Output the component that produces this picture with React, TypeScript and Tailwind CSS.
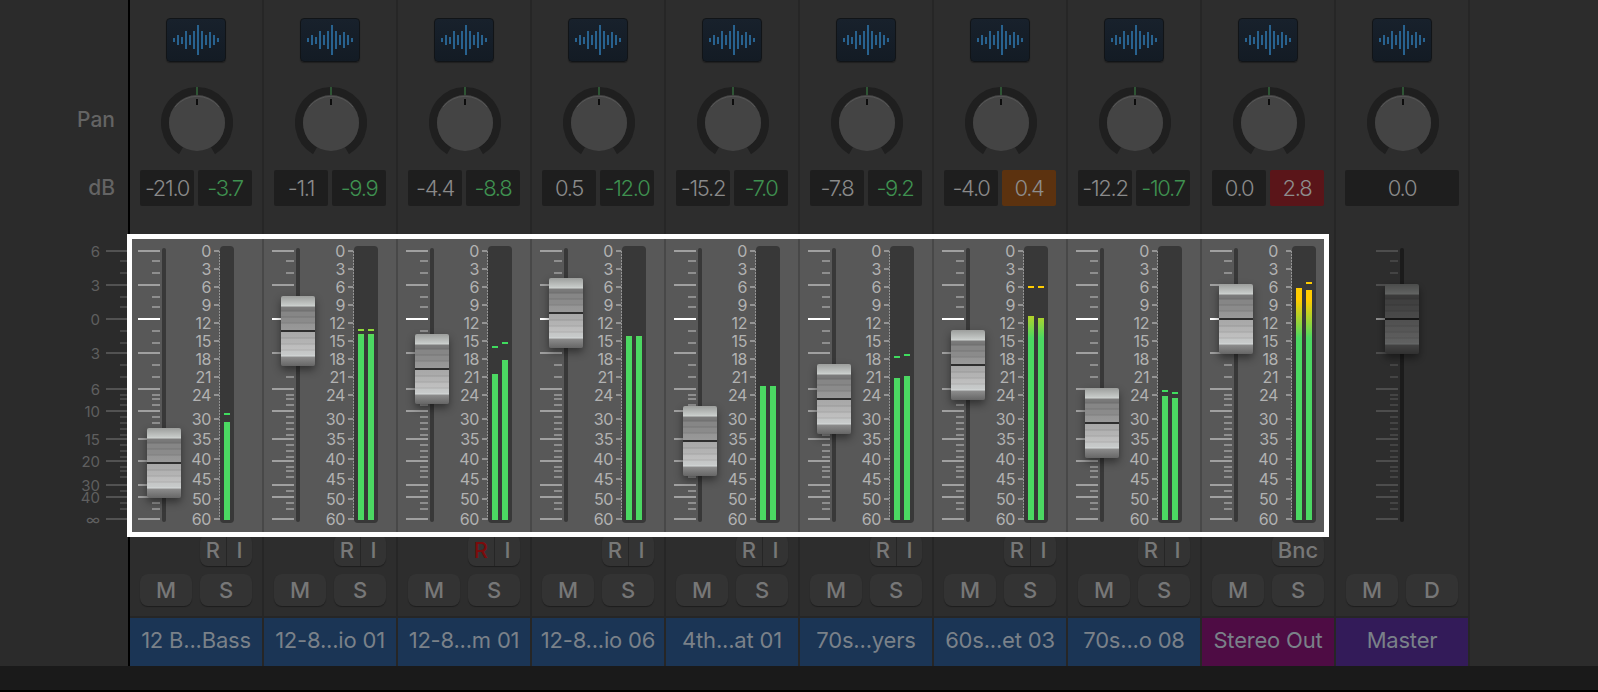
const LONG_TICKS = [251, 285, 319, 353, 389, 411, 439, 461, 485, 497, 519]
const SHORT_TICKS = [261, 273, 297, 307, 331, 343, 365, 377, 395, 399, 405, 417, 423, 429, 435, 445, 451, 457, 467, 471, 477, 491, 503, 509]
const FADER_LABELS: [string, number][] = [
  ["6", 251], ["3", 285], ["0", 319], ["3", 353], ["6", 389], ["10", 411],
  ["15", 439], ["20", 461], ["30", 485], ["40", 497], ["∞", 519],
]
const METER_LABELS: [string, number][] = [
  ["0", 251], ["3", 269], ["6", 287], ["9", 305], ["12", 323], ["15", 341], ["18", 359], ["21", 377],
  ["24", 395], ["30", 419], ["35", 439], ["40", 459], ["45", 479], ["50", 499], ["60", 519],
]
const WAVE = [4, 10, 7, 18, 10, 18, 30, 18, 10, 16, 10, 4]

// y positions are page pixels, the fader section starts at 239
const SECTION_TOP = 239

type Bar = { top: number; peak?: number; peakColor?: string }
type StripData = {
  name: string
  color: string
  db: string
  level?: string
  levelBg?: string
  levelColor?: string
  fader: number
  bars: Bar[]
  upper?: string
  armed?: boolean
  lastSelected?: boolean
}

const LIME = "#8ed83a"
const MINT = "#3fdc5e"
const YELLOW = "#ffcc00"
const BLUE = "bg-[#1b3555]"

const strips: StripData[] = [
  { name: "12 B...Bass", color: BLUE, db: "-21.0", level: "-3.7", fader: 428, bars: [{ top: 422, peak: 413, peakColor: MINT }] },
  { name: "12-8...io 01", color: BLUE, db: "-1.1", level: "-9.9", fader: 296, bars: [{ top: 334, peak: 329, peakColor: LIME }, { top: 334, peak: 329, peakColor: LIME }] },
  { name: "12-8...m 01", color: BLUE, db: "-4.4", level: "-8.8", fader: 334, armed: true, bars: [{ top: 374, peak: 346, peakColor: MINT }, { top: 360, peak: 342, peakColor: MINT }] },
  { name: "12-8...io 06", color: BLUE, db: "0.5", level: "-12.0", fader: 278, bars: [{ top: 336 }, { top: 336 }] },
  { name: "4th...at 01", color: BLUE, db: "-15.2", level: "-7.0", fader: 406, bars: [{ top: 386 }, { top: 386 }] },
  { name: "70s...yers", color: BLUE, db: "-7.8", level: "-9.2", fader: 364, bars: [{ top: 378, peak: 356, peakColor: MINT }, { top: 376, peak: 354, peakColor: MINT }] },
  { name: "60s...et 03", color: BLUE, db: "-4.0", level: "0.4", levelBg: "bg-[#5c320f]", levelColor: "text-[#8d8d8d]", fader: 330, bars: [{ top: 316, peak: 286, peakColor: YELLOW }, { top: 318, peak: 286, peakColor: YELLOW }] },
  { name: "70s...o 08", color: BLUE, db: "-12.2", level: "-10.7", fader: 388, bars: [{ top: 396, peak: 390, peakColor: MINT }, { top: 398, peak: 392, peakColor: MINT }] },
  { name: "Stereo Out", color: "bg-[#4e0c44]", db: "0.0", level: "2.8", levelBg: "bg-[#5a1519]", levelColor: "text-[#8d8d8d]", fader: 284, upper: "Bnc", lastSelected: true, bars: [{ top: 288 }, { top: 290, peak: 282, peakColor: YELLOW }] },
]

function WaveIcon() {
  return (
    <div className="ml-[36px] flex h-[44px] w-[60px] items-center justify-center gap-[2px] rounded-[4px] border border-[#111417] bg-gradient-to-b from-[#18212c] to-[#131b24] shadow-[0_1px_1px_rgba(0,0,0,0.3)]">
      {WAVE.map((h, i) => (
        <span key={i} className="w-[2px] bg-[#28628f]" style={{ height: h }} />
      ))}
    </div>
  )
}

function Knob() {
  return (
    <svg width="72" height="72" viewBox="0 0 72 72" className="ml-[31px] block">
      <path d="M20 63.7 A32 32 0 1 1 52 63.7" fill="none" stroke="#1f1f1f" strokeWidth="8" />
      <circle cx="36" cy="36" r="28" fill="#444444" />
      <path d="M14 20 A28 28 0 0 1 58 20" fill="none" stroke="#565656" strokeWidth="1" />
      <rect x="35.5" y="0" width="1" height="8" fill="#3f8a4a" />
      <rect x="35" y="12" width="2" height="6" fill="#0d0d0d" />
    </svg>
  )
}

function Readout({ value, bg = "bg-[#1e1e1e]", color = "text-[#8a8a8a]", wide = false }: { value: string; bg?: string; color?: string; wide?: boolean }) {
  return (
    <div className={`flex h-[36px] items-center justify-center rounded-[2px] text-[22px] font-light tracking-[-1.3px] ${wide ? "w-[114px]" : "w-[54px]"} ${bg} ${color}`}>
      {value}
    </div>
  )
}

function Cap({ top, left = "left-[17px]", dim = false }: { top: number; left?: string; dim?: boolean }) {
  return (
    <div
      className={`absolute h-[70px] w-[34px] rounded-[2px] bg-[linear-gradient(#9c9e9c_0px,#c6cac8_9px,#d0d4d2_10px,#7c7c7c_11px,#767676_14px,#6e6e6e_15px,#868686_16px,#868686_20px,#767676_21px,#8b8b8b_22px,#8b8b8b_26px,#808080_27px,#959595_28px,#999999_34px,#2e2e2e_34px,#2e2e2e_36px,#a8a8a8_36px,#ababab_41px,#999999_42px,#b2b2b2_43px,#b4b4b4_47px,#a5a5a5_48px,#bcbcbc_49px,#bfbfbf_53px,#aeaeae_54px,#c4c6c6_55px,#c8cbcb_59px,#d6dada_60px,#8c8c8c_61px,#666666_70px)] shadow-[0_4px_8px_rgba(0,0,0,0.45)] ${left} ${dim ? "brightness-[0.48]" : ""}`}
      style={{ top: top - SECTION_TOP }}
    />
  )
}

function FaderTicks({ selected }: { selected: boolean }) {
  const long = selected ? "bg-[#a0a0a0]" : "bg-[#4d4d4d]"
  const short = selected ? "bg-[#8e8e8e]" : "bg-[#444444]"
  const longLeft = selected ? "left-[8px]" : "left-[40px]"
  const shortLeft = selected ? "left-[22px]" : "left-[54px]"
  return (
    <>
      {LONG_TICKS.map((y) => (
        <span
          key={y}
          className={`absolute h-[2px] w-[22px] ${longLeft} ${y === 319 ? (selected ? "bg-white" : "bg-[#8a8a8a]") : long}`}
          style={{ top: y - SECTION_TOP - 1 }}
        />
      ))}
      {SHORT_TICKS.map((y) => (
        <span key={y} className={`absolute h-[2px] w-[8px] ${shortLeft} ${short}`} style={{ top: y - SECTION_TOP - 1 }} />
      ))}
    </>
  )
}

function Meter({ bars }: { bars: Bar[] }) {
  const stereo = bars.length > 1
  return (
    <>
      {METER_LABELS.map(([label, y]) => (
        <div key={label} className="absolute right-[51px] h-[12px] -translate-y-1/2 text-[16px] leading-[12px] tracking-[-0.4px] text-[#b2b2b2]" style={{ top: y - SECTION_TOP }}>
          {label}
        </div>
      ))}
      {METER_LABELS.map(([label, y]) => (
        <span key={label} className="absolute left-[84px] h-[2px] w-[5px] bg-[#949494]" style={{ top: y - SECTION_TOP - 1 }} />
      ))}
      <div className="absolute left-[89px] top-[12px] h-[269px] w-[1px] bg-[repeating-linear-gradient(#949494_0px,#949494_2px,transparent_2px,transparent_3px)]" />
      <div className={`absolute left-[90px] top-[7px] flex h-[277px] gap-[4px] rounded-[4px] bg-[#383838] px-[4px] ${stereo ? "w-[24px]" : "w-[14px]"}`}>
        {bars.map((bar, i) => (
          <div key={i} className="relative h-full w-[6px]">
            {bar.peak && (
              <span className="absolute left-0 h-[2px] w-[6px]" style={{ top: bar.peak - 246, backgroundColor: bar.peakColor }} />
            )}
            <span
              className="absolute left-0 w-[6px] bg-[linear-gradient(#ffcc00_49px,#4bd862_87px)] bg-[length:100%_269px] bg-bottom bg-no-repeat"
              style={{ top: bar.top - 246, height: 520 - bar.top }}
            />
          </div>
        ))}
      </div>
    </>
  )
}

function Key({ children }: { children: React.ReactNode }) {
  return (
    <div className="flex h-[32px] w-[52px] items-center justify-center rounded-[8px] bg-[#333333] text-[22px] font-medium text-[#777777] shadow-[0_1px_1px_rgba(0,0,0,0.35)]">
      {children}
    </div>
  )
}

function UpperKey({ upper, armed }: { upper?: string; armed?: boolean }) {
  if (upper) return <Key>{upper}</Key>
  return (
    <div className="flex h-[32px] w-[52px] rounded-[8px] bg-[#333333] text-[22px] font-medium text-[#777777] shadow-[0_1px_1px_rgba(0,0,0,0.35)]">
      <span className={`flex w-[27px] items-center justify-center border-r border-[#262626] ${armed ? "text-[#7a0c0c]" : ""}`}>R</span>
      <span className="flex flex-1 items-center justify-center">I</span>
    </div>
  )
}

function NameBar({ name, color }: { name: string; color: string }) {
  return (
    <div className="mt-[10px] border-t-2 border-[#262626]">
      <div className={`flex h-[48px] w-[132px] items-center justify-center whitespace-nowrap pb-[3px] text-[22px] tracking-[-0.2px] text-[#7a8189] ${color}`}>
        {name}
      </div>
    </div>
  )
}

function Strip({ strip }: { strip: StripData }) {
  return (
    <div className="box-content w-[132px] shrink-0 border-r-2 border-[#262626] bg-[#2d2d2d]">
      <div className="pt-[18px]">
        <WaveIcon />
        <div className="mt-[25px]">
          <Knob />
        </div>
        <div className="mt-[11px] flex gap-[4px] px-[10px]">
          <Readout value={strip.db} />
          <Readout value={strip.level ?? ""} bg={strip.levelBg} color={strip.levelColor ?? "text-[#3f9150]"} />
        </div>
      </div>

      <div className={`relative mt-[33px] h-[293px] bg-[#585858] ${strip.lastSelected ? "w-[127px]" : "w-[134px] border-r-2 border-[#484848]"}`}>
        <FaderTicks selected />
        <div className="absolute left-[32px] top-[9px] h-[274px] w-[4px] rounded-[2px] bg-[#383838]" />
        <Cap top={strip.fader} />
        <Meter bars={strip.bars} />
      </div>

      <div className="mt-[2px] flex justify-end px-[10px]">
        <UpperKey upper={strip.upper} armed={strip.armed} />
      </div>
      <div className="mt-[8px] flex gap-[8px] px-[10px]">
        <Key>M</Key>
        <Key>S</Key>
      </div>
      <NameBar name={strip.name} color={strip.color} />
    </div>
  )
}

function MasterStrip() {
  return (
    <div className="box-content w-[132px] shrink-0 border-r-2 border-[#262626] bg-[#2d2d2d]">
      <div className="pt-[18px]">
        <WaveIcon />
        <div className="mt-[25px]">
          <Knob />
        </div>
        <div className="mt-[11px] flex gap-[4px] pl-[9px]">
          <Readout value="0.0" wide />
        </div>
      </div>

      <div className="relative mt-[33px] h-[293px]">
        <FaderTicks selected={false} />
        <div className="absolute left-[64px] top-[9px] h-[274px] w-[4px] rounded-[2px] bg-[#1b1b1b]" />
        <Cap top={284} left="left-[49px]" dim />
      </div>

      <div className="mt-[42px] flex gap-[8px] px-[10px]">
        <Key>M</Key>
        <Key>D</Key>
      </div>
      <NameBar name="Master" color="bg-[#331b59]" />
    </div>
  )
}

function LabelColumn() {
  return (
    <div className="w-[128px] shrink-0 bg-[#2b2b2b] pt-[106px] text-right font-medium text-[#646464]">
      <div className="h-[28px] pr-[13px] text-[21px] leading-[28px]">Pan</div>
      <div className="mt-[40px] h-[28px] pr-[13px] text-[21px] leading-[28px]">dB</div>
      <div className="relative mt-[37px] h-[293px] font-normal">
        {FADER_LABELS.map(([label, y]) => (
          <div key={y} className="absolute right-[28px] h-[11px] -translate-y-1/2 text-[15px] leading-[11px] text-[#5f5f5f]" style={{ top: y - SECTION_TOP }}>
            {label}
          </div>
        ))}
        {LONG_TICKS.map((y) => (
          <span key={y} className="absolute right-0 h-[2px] w-[22px] bg-[#525252]" style={{ top: y - SECTION_TOP - 1 }} />
        ))}
        {SHORT_TICKS.map((y) => (
          <span key={y} className="absolute right-0 h-[2px] w-[8px] bg-[#474747]" style={{ top: y - SECTION_TOP - 1 }} />
        ))}
      </div>
    </div>
  )
}

export default function App() {
  return (
    <div className="relative flex h-[692px] w-[1598px] flex-col overflow-hidden bg-[#2c2c2c] font-['Inter',sans-serif]">
      <div className="flex h-[666px]">
        <LabelColumn />
        <div className="w-[2px] shrink-0 bg-black" />
        {strips.map((strip) => (
          <Strip key={strip.name} strip={strip} />
        ))}
        <MasterStrip />
      </div>
      <div className="h-[24px] bg-[#1a1a1a]" />
      <div className="h-[2px] bg-black" />

      {/* selection frame */}
      <div className="pointer-events-none absolute left-[127px] top-[234px] h-[303px] w-[1202px] border-[5px] border-white" />
    </div>
  )
}
